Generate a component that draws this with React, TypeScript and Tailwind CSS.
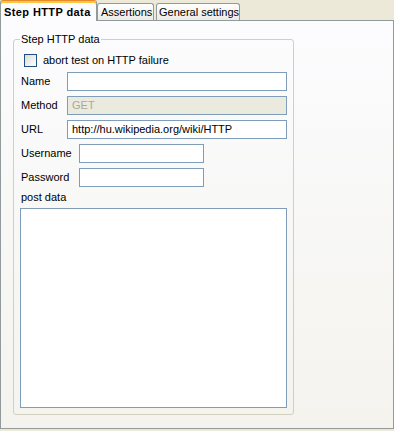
import React from "react";

function Input({ w, value, disabled }: { w: string; value?: string; disabled?: boolean }) {
  return (
    <div
      className={`${w} h-[19px] border border-[#7F9DB9] flex items-center pl-[4px] whitespace-nowrap ${
        disabled ? "bg-[#EBEADF] text-[#ACA899]" : "bg-white text-black"
      }`}
    >
      {value}
    </div>
  );
}

export default function App() {
  return (
    <div className="w-[394px] h-[431px] bg-[#ECE9D8] font-['Liberation_Sans',Arial,sans-serif] text-[11px] leading-[13px] text-black overflow-hidden">
      {/* tabs */}
      <div className="flex items-end h-[20px] relative z-10 whitespace-nowrap">
        <div className="shrink-0 w-[97px] h-[21px] mb-[-1px] rounded-t-[3px] border-t border-l border-r border-t-[#E68B2C] border-l-[#919B9C] border-r-[#919B9C] bg-[#FCFCFE] shadow-[inset_0_2px_0_#FFC73C] flex items-center pl-[3px] pt-[2px] font-bold tracking-[0.4px]">
          Step HTTP data
        </div>
        <div className="shrink-0 w-[57px] h-[17px] rounded-t-[3px] border-t border-l border-r border-[#919B9C] bg-gradient-to-b from-white to-[#ECEBE6] flex items-center pl-[3px]">
          Assertions
        </div>
        <div className="shrink-0 w-[84px] h-[17px] ml-[2px] rounded-t-[3px] border-t border-l border-r border-[#919B9C] bg-gradient-to-b from-white to-[#ECEBE6] flex items-center pl-[2px]">
          General settings
        </div>
      </div>
      {/* panel */}
      <div className="w-[394px] h-[409px] border border-[#919B9C] bg-gradient-to-b from-[#FCFCFE] to-[#F4F3EE] pt-[12px]">
        <fieldset className="ml-[12px] w-[281px] border border-[#D0D0BF] rounded-[3px] px-[6px] pt-[8px] pb-[6px]">
          <legend className="px-[1px] leading-[13px]">Step HTTP data</legend>
          <div className="flex items-center h-[13px]">
            <div className="ml-[4px] w-[13px] h-[13px] border border-[#1C5180] bg-gradient-to-br from-[#DCDCD7] to-white" />
            <span className="ml-[6px]">abort test on HTTP failure</span>
          </div>
          <div className="flex items-center mt-[5px]">
            <span className="w-[47px] pl-[1px]">Name</span>
            <Input w="w-[220px]" />
          </div>
          <div className="flex items-center mt-[5px]">
            <span className="w-[47px] pl-[1px]">Method</span>
            <Input w="w-[220px]" value="GET" disabled />
          </div>
          <div className="flex items-center mt-[5px]">
            <span className="w-[47px] pl-[1px]">URL</span>
            <Input w="w-[220px]" value="http://hu.wikipedia.org/wiki/HTTP" />
          </div>
          <div className="flex items-center mt-[5px]">
            <span className="w-[59px] pl-[1px]">Username</span>
            <Input w="w-[125px]" />
          </div>
          <div className="flex items-center mt-[5px]">
            <span className="w-[59px] pl-[1px]">Password</span>
            <Input w="w-[125px]" />
          </div>
          <div className="mt-[4px] pl-[1px] h-[13px]">post data</div>
          <div className="mt-[4px] w-[267px] h-[200px] border border-[#7F9DB9] bg-white" />
        </fieldset>
      </div>
    </div>
  );
}
